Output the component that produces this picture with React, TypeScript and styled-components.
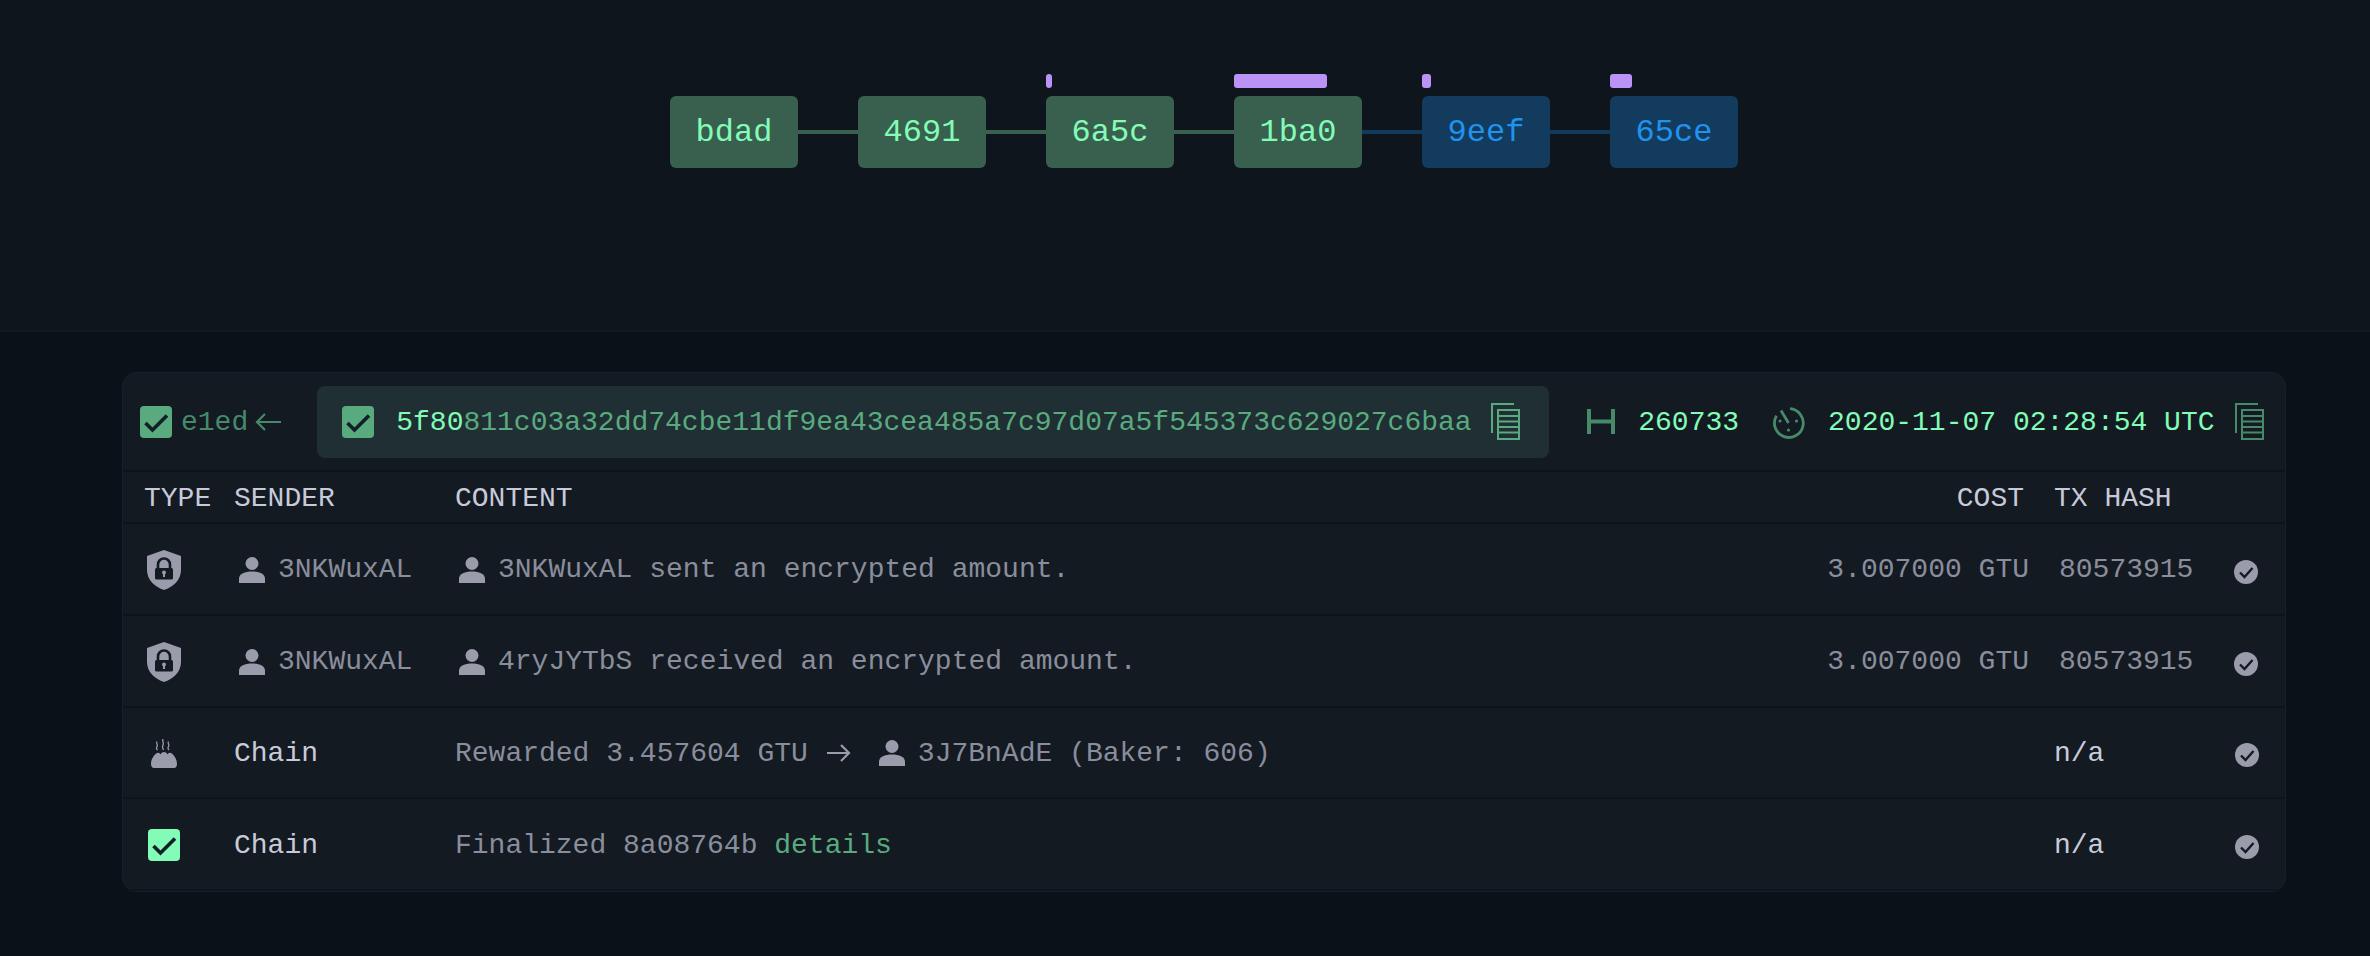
import React from "react";
import styled, { createGlobalStyle } from "styled-components";

const MINT = "#82fcb6";
const GREEN = "#5aaa80";
const DIM_GREEN = "#468a69";
const GREY = "#8a8d9c";
const ICON_GREY = "#9a9cab";
const LIGHT = "#c8cada";
const DARK = "#131a22";

const GlobalStyle = createGlobalStyle`
  html, body {
    margin: 0;
    padding: 0;
    background: #0a1118;
  }
  body {
    font-family: "Liberation Mono", "DejaVu Sans Mono", monospace;
    font-size: 28px;
  }
`;

type Block = { hash: string; tone: "final" | "pending"; bar?: number };

const blocks: Block[] = [
  { hash: "bdad", tone: "final" },
  { hash: "4691", tone: "final" },
  { hash: "6a5c", tone: "final", bar: 6 },
  { hash: "1ba0", tone: "final", bar: 93 },
  { hash: "9eef", tone: "pending", bar: 9 },
  { hash: "65ce", tone: "pending", bar: 22 },
];

const Check = ({ color = "#131f27" }: { color?: string }) => (
  <svg width="32" height="32" viewBox="0 0 32 32">
    <path d="M5.500 17l7 7L27 9.500" fill="none" stroke={color} strokeWidth="3.600" />
  </svg>
);

const PersonIcon = () => (
  <svg width="26" height="26" viewBox="0 0 26 26">
    <circle cx="13" cy="6.500" r="6.500" fill={ICON_GREY} />
    <path d="M0 26v-4.500C0 17 6 14.500 13 14.500s13 2.500 13 7V26z" fill={ICON_GREY} />
  </svg>
);

const ShieldIcon = () => (
  <svg width="34" height="40" viewBox="0 0 34 40">
    <path d="M17 0l17 6v14c0 10-8 17-17 20C8 37 0 30 0 20V6z" fill={ICON_GREY} />
    <path d="M11 19v-4.500a6 6 0 0 1 12 0V19" fill="none" stroke={DARK} strokeWidth="2.600" />
    <rect x="8" y="18" width="18" height="11.500" rx="1.500" fill={DARK} />
    <circle cx="17" cy="22.500" r="2" fill={ICON_GREY} />
    <rect x="16" y="23" width="2" height="4" fill={ICON_GREY} />
  </svg>
);

const BreadIcon = () => (
  <svg width="26" height="29" viewBox="0 0 26 29">
    <path
      d="M6 2.500c-1.200 2 1.200 3 0 5s0 3 .5 3.500M12 0c-1.200 2 1.200 3.500 0 6s0 3.500 .5 5M17.500 2.500c-1.200 2 1.200 3 0 5s0 3 .5 3.500"
      fill="none"
      stroke={ICON_GREY}
      strokeWidth="1.300"
    />
    <path
      d="M0 25c0-5 3-9 6-11 1.500-.8 3 0 3.500 1.500.5-1.500 2-2.500 3.500-2.500s3 1 3.500 2.500c.5-1.500 2-2.300 3.500-1.500 3 2 6 6 6 11 0 2-1 4-3 4H3c-2 0-3-2-3-4z"
      fill={ICON_GREY}
    />
  </svg>
);

const StatusIcon = () => (
  <svg width="24" height="24" viewBox="0 0 24 24">
    <circle cx="12" cy="12" r="12" fill={ICON_GREY} />
    <path d="M6 12.500l4.500 4.500L18.500 8" fill="none" stroke={DARK} strokeWidth="2.400" />
  </svg>
);

const CopyIcon = ({ color }: { color: string }) => (
  <svg width="29" height="37" viewBox="0 0 29 37">
    <path d="M1 30V1h22" fill="none" stroke={color} strokeWidth="2" />
    <rect x="7" y="7" width="21" height="29" fill="none" stroke={color} strokeWidth="2" />
    <path d="M7 13h21M7 18.500h21M7 24h21M7 29.500h21" stroke={color} strokeWidth="2" />
  </svg>
);

const HeightIcon = () => (
  <svg width="28" height="25" viewBox="0 0 28 25">
    <path d="M2 0v25M26 0v25M2 12.500h24" fill="none" stroke={DIM_GREEN} strokeWidth="4" />
  </svg>
);

const TimerIcon = () => (
  <svg width="32" height="32" viewBox="0 0 32 32">
    <path
      d="M17 1.700a14.400 14.400 0 1 1-13.500 7M15.500 16L8 3.500"
      fill="none"
      stroke={DIM_GREEN}
      strokeWidth="2.800"
    />
    <circle cx="7" cy="14" r="1.600" fill={DIM_GREEN} />
    <circle cx="23.500" cy="14" r="1.600" fill={DIM_GREEN} />
    <circle cx="15.500" cy="23" r="1.600" fill={DIM_GREEN} />
  </svg>
);

const ArrowIcon = ({ color, left }: { color: string; left?: boolean }) => (
  <svg width={left ? 26 : 24} height="20" viewBox={left ? "0 0 26 20" : "0 0 24 20"}>
    <path
      d={left ? "M26 10H2M10 2l-8 8 8 8" : "M0 10h22M14 2l8 8-8 8"}
      fill="none"
      stroke={color}
      strokeWidth="2.200"
    />
  </svg>
);

export default function App() {
  return (
    <>
      <GlobalStyle />
      <Page>
        <ChainSection>
          {blocks.map((b, i) => (
            <React.Fragment key={b.hash}>
              {i > 0 && <Link $tone={b.tone} />}
              <BlockColumn>
                <FinalBar>{b.bar && <BarFill style={{ width: b.bar }} />}</FinalBar>
                <BlockNode $tone={b.tone}>{b.hash}</BlockNode>
              </BlockColumn>
            </React.Fragment>
          ))}
        </ChainSection>

        <Content>
          <Card>
            <CardHeader>
              <CheckBox $color={GREEN}>
                <Check />
              </CheckBox>
              <ParentHash>e1ed</ParentHash>
              <ArrowIcon color={DIM_GREEN} left />
              <HashPill>
                <CheckBox $color={GREEN}>
                  <Check />
                </CheckBox>
                <HashText>
                  <strong>5f80</strong>811c03a32dd74cbe11df9ea43cea485a7c97d07a5f545373c629027c6baa
                </HashText>
                <CopyIcon color={GREEN} />
              </HashPill>
              <MetaIcon $gapLeft={38}>
                <HeightIcon />
              </MetaIcon>
              <MetaText $gap={23}>260733</MetaText>
              <MetaIcon $gapLeft={34} $drop={3}>
                <TimerIcon />
              </MetaIcon>
              <MetaText $gap={23}>2020-11-07 02:28:54 UTC</MetaText>
              <CopySlot>
                <CopyIcon color={DIM_GREEN} />
              </CopySlot>
            </CardHeader>

            <HeadRow>
              <span>TYPE</span>
              <span>SENDER</span>
              <span>CONTENT</span>
              <CostCell $inset={5}>COST</CostCell>
              <HashCell $inset={25}>TX HASH</HashCell>
              <span />
            </HeadRow>

            <Row>
              <TypeCell>
                <ShieldIcon />
              </TypeCell>
              <SenderCell>
                <PersonIcon />
                3NKWuxAL
              </SenderCell>
              <ContentCell>
                <PersonIcon />
                3NKWuxAL sent an encrypted amount.
              </ContentCell>
              <CostCell>3.007000 GTU</CostCell>
              <HashCell $inset={30}>80573915</HashCell>
              <StatusCell>
                <StatusIcon />
              </StatusCell>
            </Row>

            <Row>
              <TypeCell>
                <ShieldIcon />
              </TypeCell>
              <SenderCell>
                <PersonIcon />
                3NKWuxAL
              </SenderCell>
              <ContentCell>
                <PersonIcon />
                4ryJYTbS received an encrypted amount.
              </ContentCell>
              <CostCell>3.007000 GTU</CostCell>
              <HashCell $inset={30}>80573915</HashCell>
              <StatusCell>
                <StatusIcon />
              </StatusCell>
            </Row>

            <Row>
              <TypeCell>
                <BreadIcon />
              </TypeCell>
              <SenderCell $light>Chain</SenderCell>
              <ContentCell>
                Rewarded 3.457604 GTU
                <RewardArrow>
                  <ArrowIcon color={ICON_GREY} />
                </RewardArrow>
                <PersonIcon />
                3J7BnAdE (Baker: 606)
              </ContentCell>
              <span />
              <HashCell $inset={25} $light>
                n/a
              </HashCell>
              <StatusCell $inset={1}>
                <StatusIcon />
              </StatusCell>
            </Row>

            <Row>
              <TypeCell>
                <CheckBox $color={MINT}>
                  <Check />
                </CheckBox>
              </TypeCell>
              <SenderCell $light>Chain</SenderCell>
              <ContentCell>
                <span>
                  Finalized 8a08764b <DetailsLink>details</DetailsLink>
                </span>
              </ContentCell>
              <span />
              <HashCell $inset={25} $light>
                n/a
              </HashCell>
              <StatusCell $inset={1}>
                <StatusIcon />
              </StatusCell>
            </Row>
          </Card>
        </Content>
      </Page>
    </>
  );
}

const Page = styled.div`
  width: 2370px;
  height: 956px;
  display: flex;
  flex-direction: column;
  overflow: hidden;
`;

const ChainSection = styled.section`
  box-sizing: border-box;
  height: 332px;
  padding: 74px 0 0 670px;
  display: flex;
  align-items: flex-start;
  background: #0e151d;
  border-bottom: 2px solid #121a22;
`;

const BlockColumn = styled.div`
  display: flex;
  flex-direction: column;
  gap: 8px;
  width: 128px;
`;

const FinalBar = styled.div`
  height: 14px;
`;

const BarFill = styled.div`
  height: 14px;
  border-radius: 3px;
  background: #bb92f5;
`;

const BlockNode = styled.div<{ $tone: Block["tone"] }>`
  height: 72px;
  display: flex;
  align-items: center;
  justify-content: center;
  border-radius: 6px;
  font-size: 32px;
  background: ${(p) => (p.$tone === "final" ? "#395f4f" : "#133b5e")};
  color: ${(p) => (p.$tone === "final" ? MINT : "#1f93ee")};
`;

const Link = styled.div<{ $tone: Block["tone"] }>`
  width: 60px;
  height: 4px;
  margin-top: 56px;
  background: ${(p) => (p.$tone === "final" ? "#395f4f" : "#133b5e")};
`;

const Content = styled.main`
  flex: 1;
  padding: 40px 84px 0 122px;
  background: #0a1118;
`;

const Card = styled.div`
  box-sizing: border-box;
  width: 2164px;
  height: 520px;
  background: ${DARK};
  border: 1px solid #171f28;
  border-radius: 14px;
  overflow: hidden;
`;

const CardHeader = styled.header`
  box-sizing: border-box;
  height: 99px;
  padding-left: 17px;
  display: flex;
  align-items: center;
  border-bottom: 2px solid #0e141b;
`;

const CheckBox = styled.span<{ $color: string }>`
  width: 32px;
  height: 32px;
  flex: none;
  display: inline-flex;
  border-radius: 4px;
  background: ${(p) => p.$color};
`;

const ParentHash = styled.span`
  margin: 2px 7px 0 9px;
  color: ${DIM_GREEN};
`;

const HashPill = styled.div`
  box-sizing: border-box;
  width: 1232px;
  height: 72px;
  margin-left: 36px;
  padding-left: 25px;
  display: flex;
  align-items: center;
  gap: 22px;
  border-radius: 8px;
  background: #1f2f33;
`;

const HashText = styled.span`
  color: ${GREEN};
  margin-right: -3px;
  padding-top: 2px;

  strong {
    font-weight: 400;
    color: ${MINT};
  }
`;

const MetaIcon = styled.span<{ $gapLeft: number; $drop?: number }>`
  display: inline-flex;
  margin-left: ${(p) => p.$gapLeft}px;
  padding-top: ${(p) => p.$drop ?? 0}px;
`;

const MetaText = styled.span<{ $gap: number }>`
  margin-left: ${(p) => p.$gap}px;
  padding-top: 2px;
  color: ${MINT};
`;

const CopySlot = styled.span`
  display: inline-flex;
  margin-left: 20px;
`;

const rowGrid = `
  display: grid;
  grid-template-columns: 90px 221px 1fr 210px 205px 51px;
  align-items: center;
  padding: 2px 0 0 21px;
  box-sizing: border-box;
  border-bottom: 2px solid #0e141b;
`;

const HeadRow = styled.div`
  ${rowGrid}
  height: 52px;
  color: ${LIGHT};
`;

const Row = styled.div`
  ${rowGrid}
  height: 91.75px;
  color: ${GREY};
`;

const TypeCell = styled.div`
  width: 40px;
  display: flex;
  justify-content: center;
`;

const SenderCell = styled.div<{ $light?: boolean }>`
  display: flex;
  align-items: center;
  gap: 13px;
  padding-left: ${(p) => (p.$light ? 0 : 5)}px;
  color: ${(p) => (p.$light ? LIGHT : GREY)};
`;

const ContentCell = styled.div`
  display: flex;
  align-items: center;
  gap: 13px;
  padding-left: 0;
  white-space: pre;

  & > svg:first-child {
    margin-left: 4px;
  }
`;

const RewardArrow = styled.span`
  display: inline-flex;
  margin: 0 15px 0 6px;
`;

const DetailsLink = styled.span`
  color: ${GREEN};
`;

const CostCell = styled.div<{ $inset?: number }>`
  text-align: right;
  padding-right: ${(p) => p.$inset ?? 0}px;
`;

const HashCell = styled.div<{ $inset: number; $light?: boolean }>`
  padding-left: ${(p) => p.$inset}px;
  color: ${(p) => (p.$light ? LIGHT : "inherit")};
`;

const StatusCell = styled.div<{ $inset?: number }>`
  display: flex;
  padding: 4px 0 0 ${(p) => p.$inset ?? 0}px;
`;
